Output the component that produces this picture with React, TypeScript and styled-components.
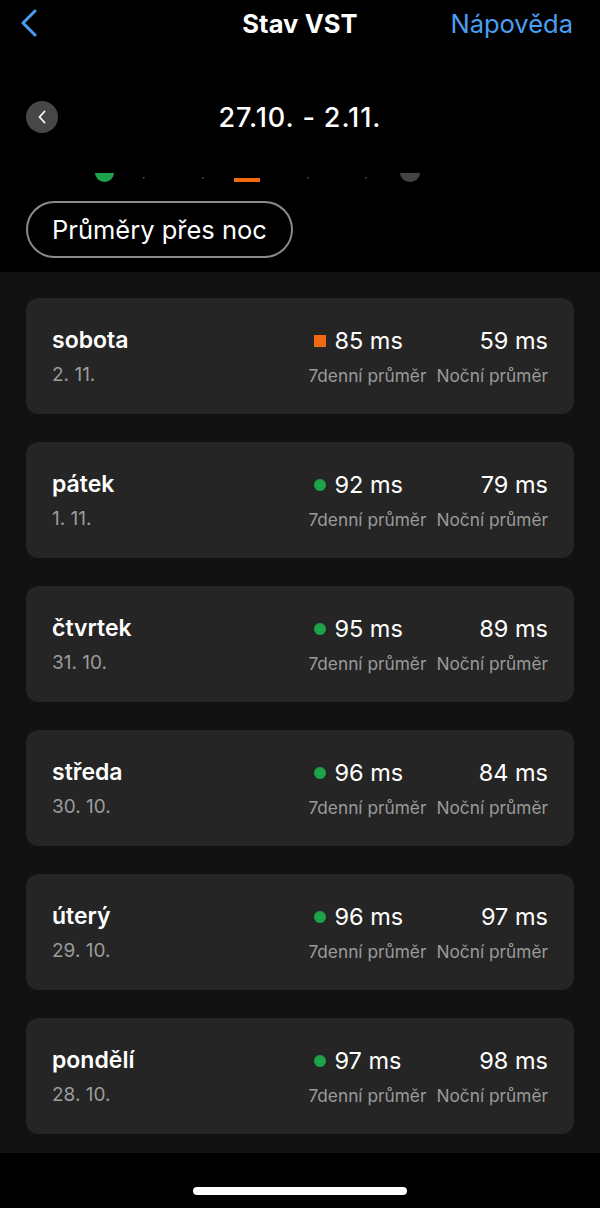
import React from 'react';
import styled, { createGlobalStyle } from 'styled-components';

const GlobalStyle = createGlobalStyle`
  html, body {
    margin: 0;
    padding: 0;
    background: #000;
  }
  body {
    font-family: 'Inter', 'Noto Sans', sans-serif;
    color: #fff;
    -webkit-font-smoothing: antialiased;
  }
`;

type Marker = 'square' | 'dot';

interface IDay {
  name: string;
  date: string;
  weekAvg: number;
  nightAvg: number;
  marker: Marker;
}

const days: IDay[] = [
  { name: 'sobota', date: '2. 11.', weekAvg: 85, nightAvg: 59, marker: 'square' },
  { name: 'pátek', date: '1. 11.', weekAvg: 92, nightAvg: 79, marker: 'dot' },
  { name: 'čtvrtek', date: '31. 10.', weekAvg: 95, nightAvg: 89, marker: 'dot' },
  { name: 'středa', date: '30. 10.', weekAvg: 96, nightAvg: 84, marker: 'dot' },
  { name: 'úterý', date: '29. 10.', weekAvg: 96, nightAvg: 97, marker: 'dot' },
  { name: 'pondělí', date: '28. 10.', weekAvg: 97, nightAvg: 98, marker: 'dot' },
];

export default function App() {
  return (
    <>
      <GlobalStyle />
      <Screen>
        <Header>
          <NavBar>
            <BackButton aria-label="Zpět">
              <svg width="18" height="28" viewBox="0 0 18 28">
                <path d="M15 2 L3 14 L15 26" fill="none" stroke="#4a9ff2" strokeWidth="3" strokeLinecap="round" strokeLinejoin="round" />
              </svg>
            </BackButton>
            <Title>Stav VST</Title>
            <HelpLink>Nápověda</HelpLink>
          </NavBar>

          <DateRow>
            <PrevButton aria-label="Předchozí týden">
              <svg width="10" height="14" viewBox="0 0 10 14">
                <path d="M7.5 1.5 L2.5 7 L7.5 12.5" fill="none" stroke="#fff" strokeWidth="1.8" strokeLinecap="round" strokeLinejoin="round" />
              </svg>
            </PrevButton>
            <DateRange>27.10. - 2.11.</DateRange>
          </DateRow>

          <ChartPeek>
            <svg width="600" height="10" viewBox="0 0 600 10">
              <ellipse cx="104.5" cy="0" rx="9.5" ry="9" fill="#1ea34a" />
              <rect x="143" y="4" width="1.5" height="1.5" fill="#555" />
              <rect x="202" y="4" width="1.5" height="1.5" fill="#555" />
              <rect x="234" y="5" width="26" height="4" fill="#f06a14" />
              <rect x="307" y="4" width="1.5" height="1.5" fill="#555" />
              <rect x="365" y="4" width="1.5" height="1.5" fill="#555" />
              <ellipse cx="410" cy="0" rx="10" ry="9" fill="#444" />
            </svg>
          </ChartPeek>

          <PillButton>Průměry přes noc</PillButton>
        </Header>

        <List>
          {days.map((day) => (
            <DayCard key={day.name}>
              <DayInfo>
                <DayName>{day.name}</DayName>
                <DayDate>{day.date}</DayDate>
              </DayInfo>
              <Stat>
                <StatValue $indent>
                  <StatMarker $shape={day.marker} />
                  {day.weekAvg} ms
                </StatValue>
                <StatLabel>7denní průměr</StatLabel>
              </Stat>
              <Stat $right>
                <StatValue>{day.nightAvg} ms</StatValue>
                <StatLabel>Noční průměr</StatLabel>
              </Stat>
            </DayCard>
          ))}
        </List>

        <HomeBar>
          <HomeIndicator />
        </HomeBar>
      </Screen>
    </>
  );
}

const Screen = styled.div`
  width: 600px;
  height: 1208px;
  display: flex;
  flex-direction: column;
  background: #000;
  overflow: hidden;
`;

const Header = styled.header`
  display: flex;
  flex-direction: column;
  background: #000;
  padding-bottom: 14px;
`;

const NavBar = styled.div`
  height: 50px;
  display: grid;
  grid-template-columns: 1fr auto 1fr;
  align-items: center;
  padding: 0 27px;
`;

const BackButton = styled.button`
  justify-self: start;
  background: none;
  border: none;
  padding: 0;
  margin: -4px 0 0 -7px;
  display: flex;
  align-items: center;
  cursor: pointer;
`;

const Title = styled.h1`
  margin: 0;
  font-size: 25.5px;
  font-weight: 700;
  color: #fff;
  letter-spacing: 0.1px;
  margin-top: -3px;
`;

const HelpLink = styled.a`
  justify-self: end;
  font-size: 25.5px;
  font-weight: 400;
  color: #4a9ff2;
  margin-top: -3px;
`;

const DateRow = styled.div`
  position: relative;
  height: 36px;
  margin-top: 49px;
  display: flex;
  align-items: center;
  justify-content: center;
`;

const PrevButton = styled.button`
  position: absolute;
  left: 26px;
  top: 2px;
  width: 32px;
  height: 32px;
  border-radius: 50%;
  border: none;
  background: #474747;
  display: flex;
  align-items: center;
  justify-content: center;
  padding: 0;
  cursor: pointer;
`;

const DateRange = styled.div`
  font-size: 27px;
  font-weight: 500;
  color: #fff;
  letter-spacing: 0.9px;
`;

const ChartPeek = styled.div`
  height: 10px;
  margin-top: 38px;
  overflow: hidden;
  svg {
    display: block;
  }
`;

const PillButton = styled.button`
  align-self: flex-start;
  margin: 18px 0 0 26px;
  height: 57px;
  padding: 0 24px;
  border-radius: 29px;
  border: 2px solid #8a8a8a;
  background: transparent;
  color: #fff;
  font-family: 'Inter', 'Noto Sans', sans-serif;
  font-size: 25.5px;
  font-weight: 400;
  cursor: pointer;
`;

const List = styled.main`
  flex: 1;
  display: flex;
  flex-direction: column;
  gap: 28px;
  background: #111111;
  padding: 26px 26px 19px;
`;

const DayCard = styled.section`
  height: 116px;
  flex-shrink: 0;
  box-sizing: border-box;
  display: flex;
  align-items: center;
  padding: 0 26px;
  background: #252525;
  border-radius: 12px;
`;

const DayInfo = styled.div`
  flex: 1;
  display: flex;
  flex-direction: column;
  gap: 9px;
`;

const DayName = styled.div`
  font-size: 23px;
  font-weight: 600;
  color: #fff;
`;

const DayDate = styled.div`
  font-size: 19px;
  font-weight: 400;
  color: #9c9c9c;
`;

const Stat = styled.div<{ $right?: boolean }>`
  display: flex;
  flex-direction: column;
  align-items: ${(p) => (p.$right ? 'flex-end' : 'flex-start')};
  gap: 10px;
  margin-left: ${(p) => (p.$right ? '10px' : '0')};
`;

const StatValue = styled.div<{ $indent?: boolean }>`
  display: flex;
  align-items: center;
  gap: 8px;
  padding-left: ${(p) => (p.$indent ? '6px' : '0')};
  font-size: 23.5px;
  font-weight: 400;
  color: #fff;
`;

const StatMarker = styled.span<{ $shape: Marker }>`
  width: 12px;
  height: 12px;
  border-radius: ${(p) => (p.$shape === 'dot' ? '50%' : '0')};
  background: ${(p) => (p.$shape === 'dot' ? '#1ea34a' : '#f06a14')};
`;

const StatLabel = styled.div`
  font-size: 17.3px;
  font-weight: 400;
  color: #9a9a9a;
`;

const HomeBar = styled.footer`
  height: 55px;
  flex-shrink: 0;
  display: flex;
  justify-content: center;
  align-items: flex-end;
  padding-bottom: 13px;
  box-sizing: border-box;
  background: #000;
`;

const HomeIndicator = styled.div`
  width: 214px;
  height: 8px;
  border-radius: 4px;
  background: #fff;
`;
